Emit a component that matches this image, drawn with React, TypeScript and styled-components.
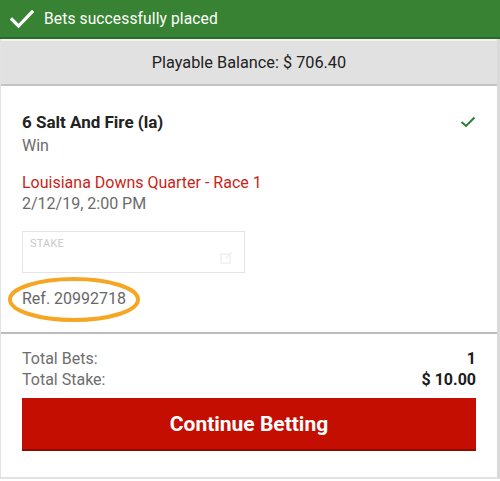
import React from "react";
import styled, { createGlobalStyle } from "styled-components";

const Global = createGlobalStyle`
  html, body { margin: 0; padding: 0; background: #fff; }
  body { font-family: Roboto, "Liberation Sans", Arial, sans-serif; }
  * { box-sizing: border-box; }
`;

const Page = styled.div`
  width: 500px;
  height: 481px;
  display: flex;
  flex-direction: column;
  background: #fff;
`;

const Banner = styled.div`
  height: 39px;
  background: #388333;
  border-bottom: 2px solid #2b6a27;
  display: flex;
  align-items: center;
  gap: 10px;
  padding: 0 0 0 10px;
  color: #fff;
  font-size: 15.6px;
  letter-spacing: 0.1px;
`;

const Frame = styled.div`
  flex: 1;
  display: flex;
  flex-direction: column;
  border-left: 1px solid #e2e2e2;
  border-right: 3px solid #d9d9d9;
  border-bottom: 2px solid #e2e2e2;
  margin-bottom: 2px;
`;

const BalanceBar = styled.div`
  height: 47px;
  background: #e1e1e1;
  border-top: 2px solid #f1f1f1;
  border-bottom: 2px solid #c3c3c3;
  display: flex;
  align-items: center;
  justify-content: center;
  font-size: 16.3px;
  color: #222;
`;

const Bet = styled.div`
  position: relative;
  padding: 26px 21px 0 21px;
  height: 248px;
  border-bottom: 2px solid #bcbcbc;
  display: flex;
  flex-direction: column;
`;

const TitleRow = styled.div`
  display: flex;
  justify-content: space-between;
  align-items: center;
`;

const Title = styled.div`
  font-weight: 700;
  font-size: 17px;
  color: #222;
  line-height: 20px;
`;

const Muted = styled.div<{ $mt?: number }>`
  font-size: 16px;
  color: #6b6b6b;
  line-height: 20px;
  margin-top: ${(p) => p.$mt ?? 0}px;
`;

const Event = styled.div`
  font-size: 16px;
  color: #cc1f1a;
  line-height: 20px;
  margin-top: 17px;
`;

const StakeBox = styled.div`
  margin-top: 17px;
  width: 223px;
  height: 42px;
  border: 1.5px solid #e4e4e4;
  position: relative;
  padding: 5px 7px;
`;

const StakeLabel = styled.div`
  font-size: 11px;
  color: #c9c9c9;
  letter-spacing: 0.2px;
`;

const StakeIcon = styled.svg`
  position: absolute;
  right: 11px;
  bottom: 8px;
`;

const Ref = styled.div`
  position: relative;
  margin-top: 16px;
  font-size: 16px;
  color: #676767;
  line-height: 20px;
  width: fit-content;
`;

const Ellipse = styled.svg`
  position: absolute;
  left: -14px;
  top: -12px;
  pointer-events: none;
`;

const Footer = styled.div`
  padding: 14px 21px 0 21px;
  display: flex;
  flex-direction: column;
`;

const TotalRow = styled.div`
  display: flex;
  justify-content: space-between;
  line-height: 21px;
  font-size: 16px;
`;

const TotalLabel = styled.span`
  color: #6e6e6e;
`;

const TotalValue = styled.span`
  color: #1c1c1c;
  font-weight: 700;
`;

const Button = styled.button`
  margin-top: 8px;
  height: 53px;
  width: 100%;
  border: none;
  border-bottom: 2px solid #8f0a00;
  background: #c40e02;
  color: #fff;
  font-family: Roboto, "Liberation Sans", Arial, sans-serif;
  font-weight: 700;
  font-size: 21px;
  padding: 0;
  cursor: pointer;
`;

export default function App() {
  return (
    <Page>
      <Global />
      <Banner>
        <svg width="24" height="18" viewBox="0 0 24 18">
          <path d="M2 9.5 L8.5 16 L22 2" fill="none" stroke="#fff" strokeWidth="3.2" strokeLinecap="square" />
        </svg>
        <span>Bets successfully placed</span>
      </Banner>
      <Frame>
        <BalanceBar>Playable Balance: $ 706.40</BalanceBar>
        <Bet>
          <TitleRow>
            <Title>6 Salt And Fire (la)</Title>
            <svg width="16" height="12" viewBox="0 0 16 12">
              <path d="M1.5 6 L6 10 L14.5 1.5" fill="none" stroke="#2e7d32" strokeWidth="2" />
            </svg>
          </TitleRow>
          <Muted $mt={4}>Win</Muted>
          <Event>Louisiana Downs Quarter - Race 1</Event>
          <Muted $mt={1}>2/12/19, 2:00 PM</Muted>
          <StakeBox>
            <StakeLabel>STAKE</StakeLabel>
            <StakeIcon width="13" height="13" viewBox="0 0 13 13">
              <rect x="1" y="3" width="9" height="9" fill="none" stroke="#f0f0f0" strokeWidth="1.5" />
              <path d="M6 7 L12 1" stroke="#f0f0f0" strokeWidth="1.5" />
            </StakeIcon>
          </StakeBox>
          <Ref>
            Ref. 20992718
            <Ellipse width="132" height="45" viewBox="0 0 132 45">
              <ellipse cx="66" cy="22.5" rx="64" ry="20.5" fill="none" stroke="#f5a623" strokeWidth="4" />
            </Ellipse>
          </Ref>
        </Bet>
        <Footer>
          <TotalRow>
            <TotalLabel>Total Bets:</TotalLabel>
            <TotalValue>1</TotalValue>
          </TotalRow>
          <TotalRow>
            <TotalLabel>Total Stake:</TotalLabel>
            <TotalValue>$ 10.00</TotalValue>
          </TotalRow>
          <Button>Continue Betting</Button>
        </Footer>
      </Frame>
    </Page>
  );
}
